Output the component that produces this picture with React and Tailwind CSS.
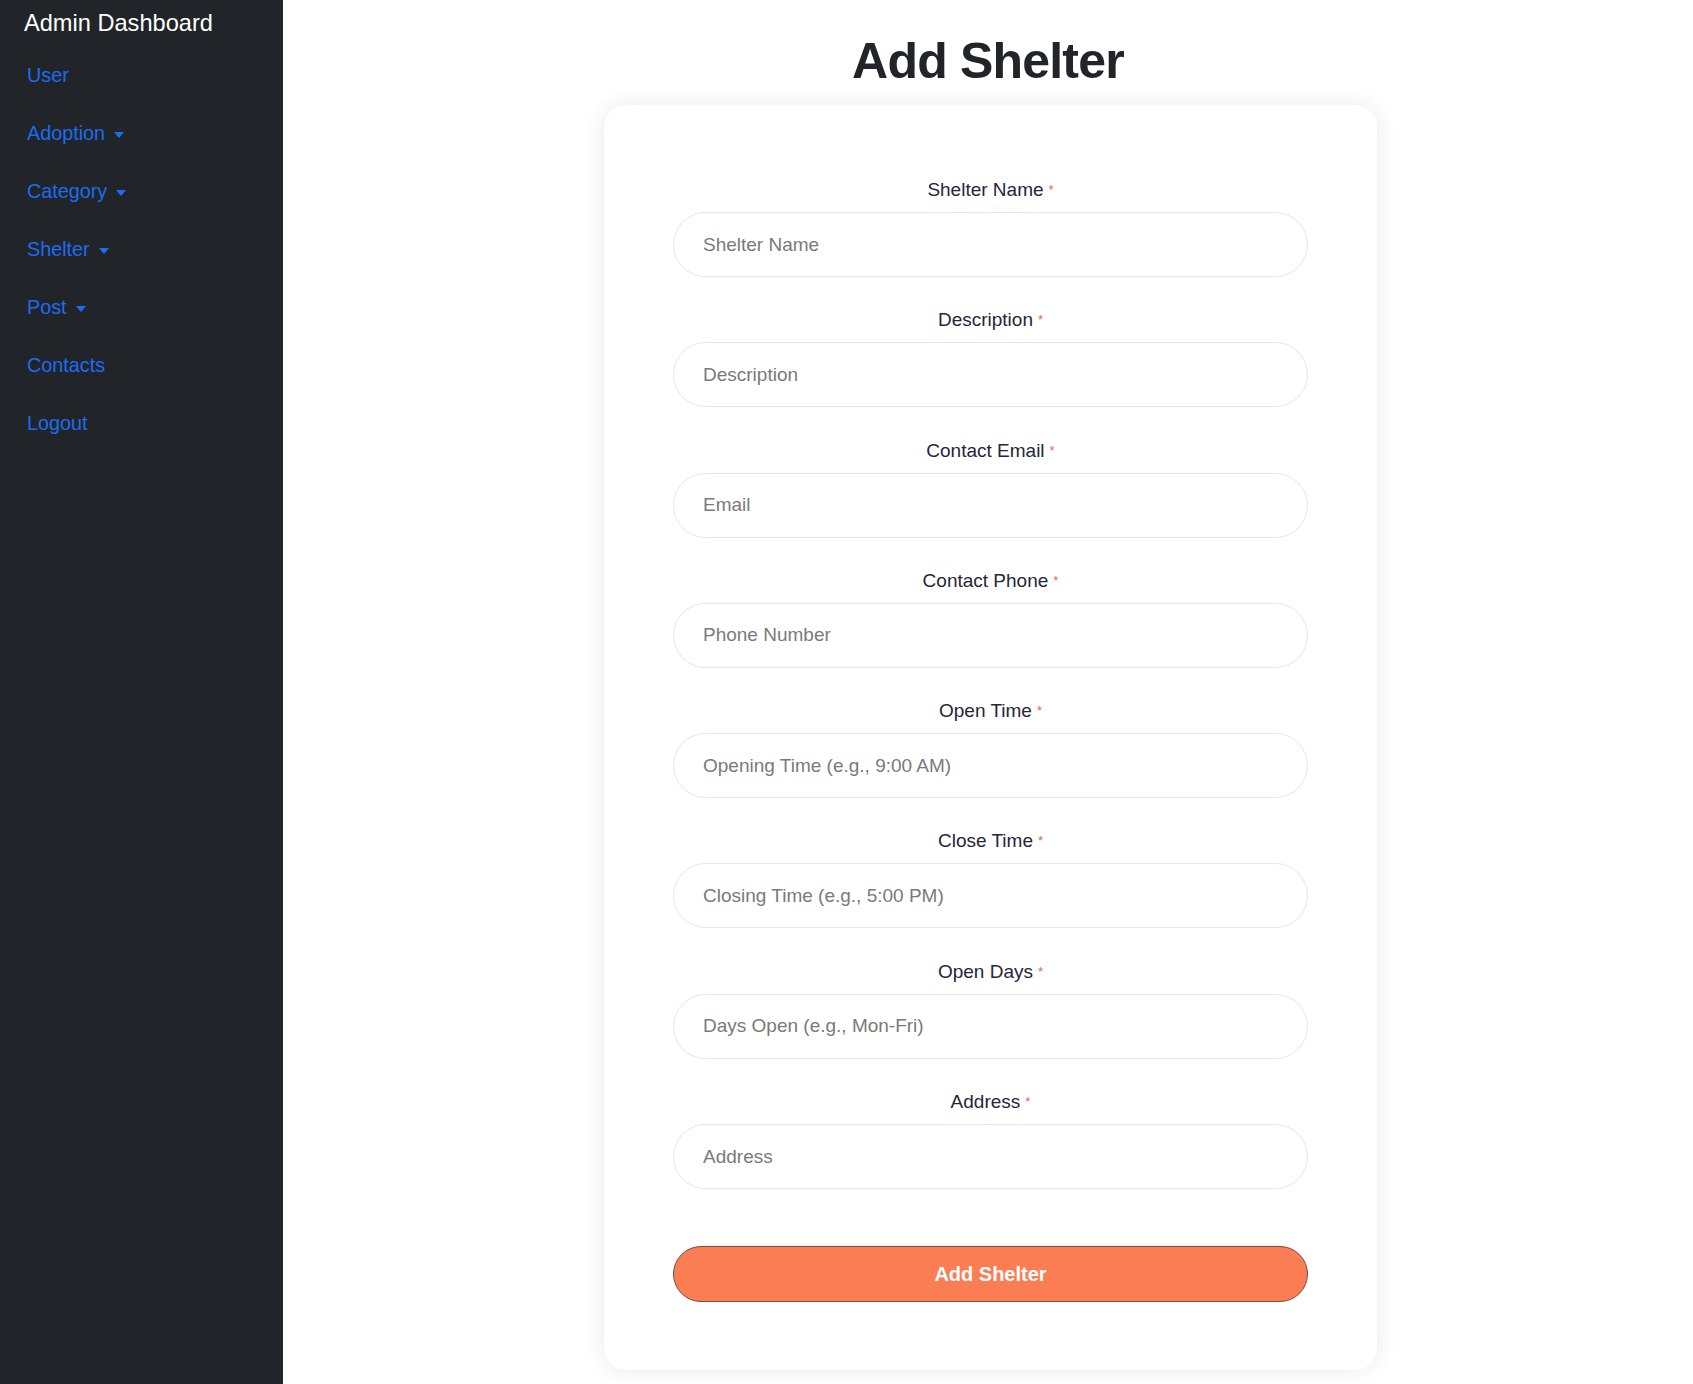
import React from 'react';

const navItems = [
  { label: 'User', dropdown: false },
  { label: 'Adoption', dropdown: true },
  { label: 'Category', dropdown: true },
  { label: 'Shelter', dropdown: true },
  { label: 'Post', dropdown: true },
  { label: 'Contacts', dropdown: false },
  { label: 'Logout', dropdown: false },
];

const fields = [
  { label: 'Shelter Name', placeholder: 'Shelter Name' },
  { label: 'Description', placeholder: 'Description' },
  { label: 'Contact Email', placeholder: 'Email' },
  { label: 'Contact Phone', placeholder: 'Phone Number' },
  { label: 'Open Time', placeholder: 'Opening Time (e.g., 9:00 AM)' },
  { label: 'Close Time', placeholder: 'Closing Time (e.g., 5:00 PM)' },
  { label: 'Open Days', placeholder: 'Days Open (e.g., Mon-Fri)' },
  { label: 'Address', placeholder: 'Address' },
];

const Sidebar = () => (
  <aside className="w-[283px] shrink-0 bg-[#212529] min-h-[1384px] pt-[9px]">
    <div className="pl-[24px] text-[23.6px] leading-[28px] text-white">Admin Dashboard</div>
    <ul className="mt-[10px]">
      {navItems.map((item) => (
        <li key={item.label} className="h-[58px] flex items-center pl-[27px]">
          <a href="#" className="flex items-center gap-[9px] text-[19.8px] text-[#1c6cf0]">
            {item.label}
            {item.dropdown && (
              <span className="inline-block w-0 h-0 border-t-[6px] border-t-[#1c6cf0] border-x-[5.5px] border-x-transparent mt-[2px]" />
            )}
          </a>
        </li>
      ))}
    </ul>
  </aside>
);

const Field = ({ label, placeholder }) => (
  <div className="mb-[29.3px]">
    <label className="block text-center text-[19px] leading-[27px] text-[#26263a] mb-[9px]">
      {label}
      <span className="text-[#e0655b] text-[13px] align-top ml-[5px]">*</span>
    </label>
    <input
      type="text"
      placeholder={placeholder}
      className="block w-full h-[65px] rounded-full border border-[#e6e6e6] bg-white pl-[29px] text-[19px] text-[#333] placeholder:text-[#7a7a7a] outline-none"
    />
  </div>
);

const App = () => {
  return (
    <div className="flex min-h-[1384px] bg-white" style={{ fontFamily: '"Liberation Sans", Arial, sans-serif' }}>
      <Sidebar />
      <main className="flex-1 flex flex-col items-center pt-[30px]">
        <h1 className="text-[50px] leading-[62px] font-bold tracking-[-0.8px] text-[#212529] mb-[13px]">
          Add Shelter
        </h1>
        <div className="ml-[5px] w-[773px] rounded-[22px] bg-white shadow-[0_0_22px_rgba(0,0,0,0.09)] px-[69px] pt-[71px] pb-[68px]">
          {fields.map((f) => (
            <Field key={f.label} {...f} />
          ))}
          <button
            type="button"
            className="mt-[57px] block w-full h-[56px] rounded-full bg-[#fa7d53] border border-[#7a4a44] text-white font-bold text-[20px]"
          >
            Add Shelter
          </button>
        </div>
      </main>
    </div>
  );
};

export default App;
